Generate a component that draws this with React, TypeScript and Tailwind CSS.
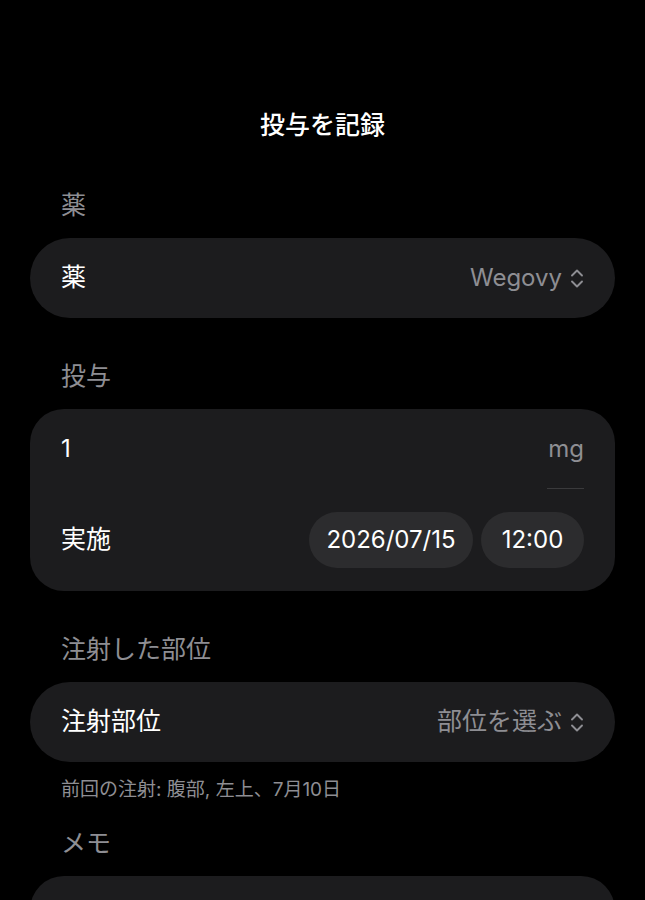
const font = {
  fontFamily: '"Inter", "Noto Sans CJK JP", sans-serif',
};

function UpDown() {
  return (
    <svg width="14" height="21" viewBox="0 0 14 21" fill="none" className="shrink-0">
      <path d="M2 7.5 L7 2.5 L12 7.5" stroke="#8e8e93" strokeWidth="1.9" strokeLinecap="round" strokeLinejoin="round" />
      <path d="M2 13.5 L7 18.5 L12 13.5" stroke="#8e8e93" strokeWidth="1.9" strokeLinecap="round" strokeLinejoin="round" />
    </svg>
  );
}

function SectionLabel({ children }: { children: React.ReactNode }) {
  return (
    <div className="px-[61px] text-[25px] leading-[30px] text-[#8e8e93] mb-[18px]">{children}</div>
  );
}

function PickerRow({ label, value, cjk }: { label: string; value: string; cjk?: boolean }) {
  return (
    <div className="mx-[30px] h-[80px] rounded-full bg-[#1c1c1e] flex items-center justify-between pl-[31px] pr-[31px]">
      <span className="text-[25px] text-white">{label}</span>
      <div className="flex items-center gap-[8px]">
        <span className={cjk ? "text-[25px] text-[#8e8e93]" : "text-[24px] text-[#8e8e93]"}>{value}</span>
        <UpDown />
      </div>
    </div>
  );
}

export default function App() {
  return (
    <div className="min-h-[900px] bg-black overflow-hidden" style={font}>
      <div className="pt-[109px] h-[141px] text-center text-[25px] leading-[32px] font-medium text-white">
        投与を記録
      </div>

      <div className="mt-[49px]">
        <SectionLabel>薬</SectionLabel>
        <PickerRow label="薬" value="Wegovy" />
      </div>

      <div className="mt-[43px]">
        <SectionLabel>投与</SectionLabel>
        <div className="mx-[30px] rounded-[34px] bg-[#1c1c1e] px-[31px] pt-[26px] pb-[23px]">
          <div className="flex justify-between items-start">
            <span className="text-[24px] leading-[28px] text-white">1</span>
            <div className="flex flex-col items-end">
              <span className="text-[24px] leading-[28px] text-[#8e8e93]">mg</span>
              <div className="mt-[25px] h-px w-[37px] bg-[#3a3a3c]" />
            </div>
          </div>
          <div className="mt-[23px] flex items-center justify-between">
            <span className="text-[25px] text-white">実施</span>
            <div className="flex gap-[8px]">
              <div className="h-[56px] w-[164px] rounded-full bg-[#2c2c2e] flex items-center justify-center text-[24px] text-white">
                2026/07/15
              </div>
              <div className="h-[56px] w-[103px] rounded-full bg-[#2c2c2e] flex items-center justify-center text-[24px] text-white">
                12:00
              </div>
            </div>
          </div>
        </div>
      </div>

      <div className="mt-[43px]">
        <SectionLabel>注射した部位</SectionLabel>
        <PickerRow label="注射部位" value="部位を選ぶ" cjk />
        <div className="px-[61px] mt-[16px] text-[19px] leading-[24px] text-[#8e8e93]">
          前回の注射: 腹部, 左上、7月10日
        </div>
      </div>

      <div className="mt-[26px]">
        <SectionLabel>メモ</SectionLabel>
        <div className="mx-[30px] h-[120px] rounded-[34px] bg-[#1c1c1e]" />
      </div>
    </div>
  );
}
